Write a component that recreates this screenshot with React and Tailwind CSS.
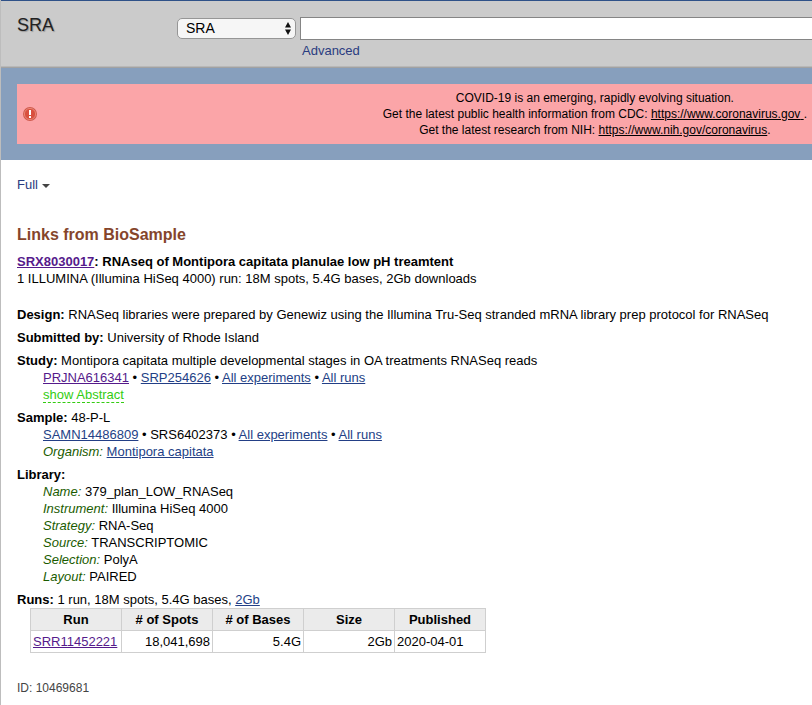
import React from "react";

function TextLink({ children, visited, bold }) {
  const color = visited ? "text-[#551a8b]" : "text-[#233f86]";
  return (
    <a href="#" className={`${color} underline ${bold ? "font-bold" : ""}`}>
      {children}
    </a>
  );
}

function Field({ label, children }) {
  return (
    <div>
      <i className="text-[#1a5c00]">{label}:</i> {children}
    </div>
  );
}

function Section({ title, value, children }) {
  return (
    <section>
      <div>
        <b>{title}:</b> {value}
      </div>
      {children && <div className="pl-[26px]">{children}</div>}
    </section>
  );
}

function Header() {
  return (
    <header className="border-t border-[#2f5188] bg-[#cbcbcb]">
      <form className="flex h-[65px] items-start pt-4 pl-4">
        <h1 className="w-40 shrink-0 text-[18px] leading-4 text-[#222] [text-shadow:1px_1px_1px_#999]">
          SRA
        </h1>
        <div className="relative mt-px shrink-0">
          <select
            aria-label="Database"
            className="block h-[21px] w-[119px] appearance-none rounded-[5px] border border-[#969696] bg-[#f6f6f6] pl-2 text-[14px] leading-[19px] text-black"
          >
            <option>SRA</option>
          </select>
          <svg
            className="pointer-events-none absolute top-[4px] right-[4px] h-[13px] w-[8px]"
            viewBox="0 0 8 13"
            aria-hidden="true"
          >
            <path d="M4 0 L7 5.5 H1 Z M4 13 L7 7.5 H1 Z" fill="#111" />
          </svg>
        </div>
        <div className="ml-1 min-w-0 flex-1">
          <input
            type="text"
            aria-label="Search term"
            className="block h-[23px] w-full border border-r-0 border-[#858585] bg-white px-1"
          />
          <a href="#" className="ml-[2px] inline-block pt-[2px] text-[#2a3c80]">
            Advanced
          </a>
        </div>
      </form>
      <div className="h-[2px] border-b border-[#a2a2a2] bg-[#b8b8b8]" />
    </header>
  );
}

function AlertIcon() {
  return (
    <svg className="h-[14px] w-[14px] shrink-0" viewBox="0 0 14 14" aria-hidden="true">
      <circle cx="7" cy="7" r="7" fill="#cf5a4c" />
      <circle cx="7" cy="7" r="5.6" fill="#d9503f" stroke="#ee9080" strokeWidth="0.8" />
      <path d="M6 3 H8 V8 H6 Z M6 9 H8 V11 H6 Z" fill="#fff" />
    </svg>
  );
}

function Banner() {
  return (
    <div className="bg-[#879fbd] py-4 pl-4">
      <div className="flex items-center bg-[#fba5a8] py-[6px] pr-[5px] pl-[6px]">
        <AlertIcon />
        <div className="ml-auto text-center text-[12px] leading-4">
          <p>COVID-19 is an emerging, rapidly evolving situation.</p>
          <p>
            Get the latest public health information from CDC:{" "}
            <a href="#" className="underline">
              https://www.coronavirus.gov{" "}
            </a>
            .
          </p>
          <p>
            Get the latest research from NIH:{" "}
            <a href="#" className="underline">
              https://www.nih.gov/coronavirus
            </a>
            .
          </p>
        </div>
      </div>
    </div>
  );
}

const columns = ["Run", "# of Spots", "# of Bases", "Size", "Published"];

function RunsTable() {
  return (
    <table className="ml-[13px] w-[456px] table-fixed border-collapse">
      <thead>
        <tr className="h-[22px] bg-[#ebebeb]">
          {columns.map((c) => (
            <th key={c} className="border border-[#cfcfcf] px-[2px] font-bold">
              {c}
            </th>
          ))}
        </tr>
      </thead>
      <tbody>
        <tr className="h-[22px]">
          <td className="border border-[#cfcfcf] px-[2px]">
            <TextLink visited>SRR11452221</TextLink>
          </td>
          <td className="border border-[#cfcfcf] px-[2px] text-right">18,041,698</td>
          <td className="border border-[#cfcfcf] px-[2px] text-right">5.4G</td>
          <td className="border border-[#cfcfcf] px-[2px] text-right">2Gb</td>
          <td className="border border-[#cfcfcf] px-[2px]">2020-04-01</td>
        </tr>
      </tbody>
    </table>
  );
}

export default function App() {
  return (
    <div className="min-h-screen border-l border-[#bdbdbd] bg-white font-['Liberation_Sans',Arial,sans-serif] text-[13px] leading-[17px] text-black">
      <Header />
      <Banner />
      <main className="px-4 pt-4 pb-2">
        <button type="button" className="flex items-center gap-1 text-[#2a3c80]">
          Full
          <svg className="mt-[2px] h-1 w-2" viewBox="0 0 8 4" aria-hidden="true">
            <path d="M0 0 H8 L4 4 Z" fill="#444" />
          </svg>
        </button>
        <h2 className="mt-8 text-[16px] leading-5 font-bold text-[#85452b]">
          Links from BioSample
        </h2>
        <p className="mt-2 font-bold">
          <TextLink visited bold>
            SRX8030017
          </TextLink>
          : RNAseq of Montipora capitata planulae low pH treamtent
        </p>
        <p>1 ILLUMINA (Illumina HiSeq 4000) run: 18M spots, 5.4G bases, 2Gb downloads</p>
        <div className="mt-[19px] flex flex-col gap-[6px]">
          <Section
            title="Design"
            value="RNASeq libraries were prepared by Genewiz using the Illumina Tru-Seq stranded mRNA library prep protocol for RNASeq"
          />
          <Section title="Submitted by" value="University of Rhode Island" />
          <Section
            title="Study"
            value="Montipora capitata multiple developmental stages in OA treatments RNASeq reads"
          >
            <div>
              <TextLink visited>PRJNA616341</TextLink> • <TextLink>SRP254626</TextLink> •{" "}
              <TextLink>All experiments</TextLink> • <TextLink>All runs</TextLink>
            </div>
            <button
              type="button"
              className="block border-b border-dashed border-[#33cc11] text-[#33cc11]"
            >
              <span className="block h-4">show Abstract</span>
            </button>
          </Section>
          <Section title="Sample" value="48-P-L">
            <div>
              <TextLink>SAMN14486809</TextLink> • SRS6402373 •{" "}
              <TextLink>All experiments</TextLink> • <TextLink>All runs</TextLink>
            </div>
            <Field label="Organism">
              <TextLink>Montipora capitata</TextLink>
            </Field>
          </Section>
          <Section title="Library">
            <Field label="Name">379_plan_LOW_RNASeq</Field>
            <Field label="Instrument">Illumina HiSeq 4000</Field>
            <Field label="Strategy">RNA-Seq</Field>
            <Field label="Source">TRANSCRIPTOMIC</Field>
            <Field label="Selection">PolyA</Field>
            <Field label="Layout">PAIRED</Field>
          </Section>
          <div>
            <div>
              <b>Runs:</b> 1 run, 18M spots, 5.4G bases, <TextLink>2Gb</TextLink>
            </div>
            <RunsTable />
          </div>
        </div>
        <p className="mt-[27px] text-[12px] text-[#444]">ID: 10469681</p>
      </main>
    </div>
  );
}
